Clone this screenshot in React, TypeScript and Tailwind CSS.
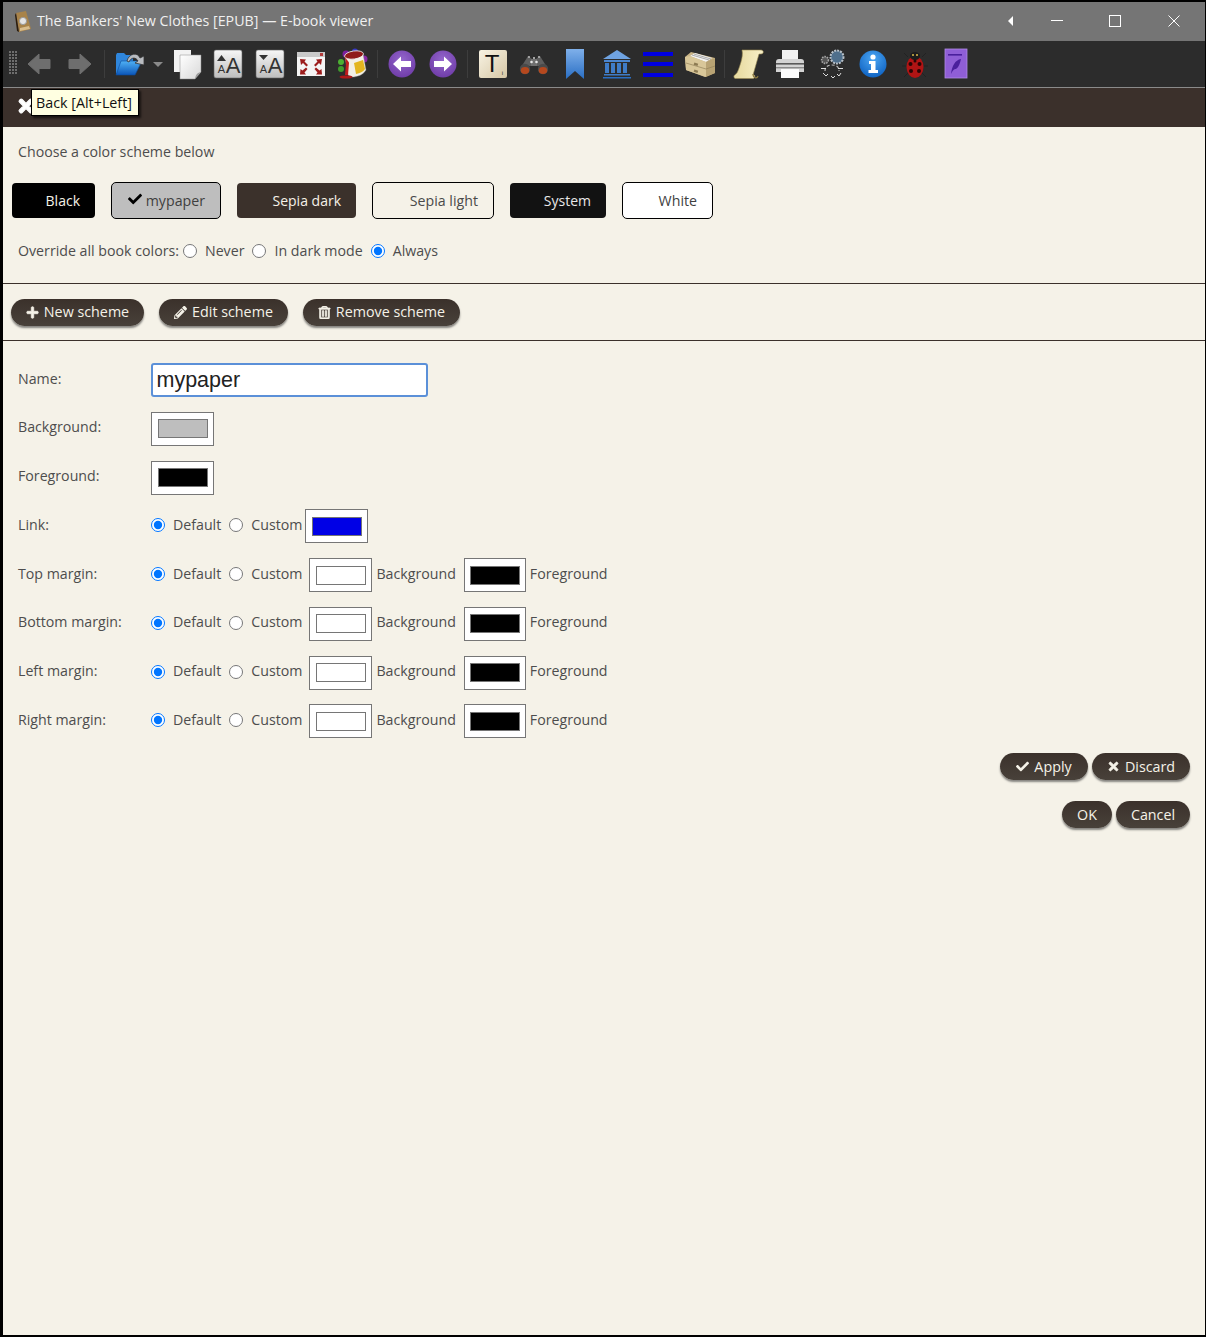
import React from "react";
import { FaCheck, FaPlus, FaPencilAlt, FaRegTrashAlt, FaTimes } from "react-icons/fa";

const font = "font-['Open_Sans','Noto_Sans',sans-serif]";

function Defs() {
  return (
    <svg width="0" height="0" className="absolute">
      <defs>
        <linearGradient id="tile" x1="0" y1="0" x2="0" y2="1"><stop offset="0" stopColor="#f7f7f7" /><stop offset="1" stopColor="#bdbdbd" /></linearGradient>
        <linearGradient id="beige" x1="0" y1="0" x2="1" y2="1"><stop offset="0" stopColor="#f8f3e3" /><stop offset="1" stopColor="#d6c7a6" /></linearGradient>
        <linearGradient id="blueV" x1="0" y1="0" x2="0" y2="1"><stop offset="0" stopColor="#7fb0ea" /><stop offset="1" stopColor="#2a6fc4" /></linearGradient>
        <linearGradient id="folder" x1="0" y1="0" x2="0" y2="1"><stop offset="0" stopColor="#4fb0f5" /><stop offset="1" stopColor="#0b55b8" /></linearGradient>
        <linearGradient id="scroll" x1="0" y1="0" x2="1" y2="0"><stop offset="0" stopColor="#e6d99e" /><stop offset="1" stopColor="#f8f0c8" /></linearGradient>
        <radialGradient id="info" cx="0.5" cy="0.3" r="0.75"><stop offset="0" stopColor="#4ca6f2" /><stop offset="1" stopColor="#0b5fc0" /></radialGradient>
        <radialGradient id="purple" cx="0.5" cy="0.35" r="0.7"><stop offset="0" stopColor="#9466cc" /><stop offset="1" stopColor="#6d3aa6" /></radialGradient>
        <linearGradient id="paper" x1="0" y1="0" x2="1" y2="1"><stop offset="0" stopColor="#ffffff" /><stop offset="1" stopColor="#d8d8d8" /></linearGradient>
      </defs>
    </svg>
  );
}

const Svg = ({ children, w = 32, h = 32 }: { children: React.ReactNode; w?: number; h?: number }) => (
  <svg width={w} height={h} viewBox={`0 0 ${w} ${h}`}>{children}</svg>
);

const GrayArrow = ({ flip }: { flip?: boolean }) => (
  <Svg><g transform={flip ? "translate(32 0) scale(-1 1)" : undefined}><path d="M5 16 L16 6 V11.5 H27 V20.5 H16 V26 Z" fill="#6e6e6e" stroke="#6e6e6e" strokeWidth="1" strokeLinejoin="round" /></g></Svg>
);
const OpenFolder = () => (
  <Svg>
    <path d="M3 7 L4 5 H11 L13 7 H20 V13 H10 L3 27 Z" fill="#2f86dc" />
    <path d="M8 13 H29 L22 27 H3 Z" fill="url(#folder)" stroke="#0a4a9c" strokeWidth="0.6" />
    <path d="M14 13 C16 5 25 4 27 10 L31 8 L31 17 L22 15 L25 13 C23 9 18 9 16 14 Z" fill="#b9bcc0" stroke="#333" strokeWidth="0.8" />
  </Svg>
);
const Pages = () => (
  <Svg>
    <path d="M3 2 H20 V24 H3 Z" fill="#f2f2f2" />
    <path d="M9 7 H30 V24 L24 31 H9 Z" fill="url(#paper)" stroke="#8a8a8a" strokeWidth="0.5" />
    <path d="M30 24 C27 25 25 25 24 31 C26 28 28 26 30 24 Z" fill="#9a9a9a" />
  </Svg>
);
const FontIcon = ({ down }: { down?: boolean }) => (
  <Svg>
    <rect x="2" y="2" width="28" height="28" rx="2" fill="url(#tile)" stroke="#666" strokeWidth="0.6" />
    <path d={down ? "M5 7 H14 L9.5 12 Z" : "M9.5 7 L14 13 H5 Z"} fill="#333" />
    <text x="9.5" y="25" fontSize="11" textAnchor="middle" fill="#333" fontFamily="Liberation Sans">A</text>
    <text x="21" y="25" fontSize="22" textAnchor="middle" fill="#333" fontFamily="Liberation Sans">A</text>
  </Svg>
);
const Fullscreen = () => (
  <Svg>
    <rect x="2" y="4" width="28" height="24" fill="#f4f4f4" />
    <rect x="2" y="4" width="28" height="5" fill="#c9c9c9" />
    <rect x="25" y="5" width="3" height="3" fill="#b23a3a" />
    <g fill="#9c1c1c">
      <path d="M5 11 L11 11.5 L9.5 13.5 L13 17 L11.5 18.5 L8 15 L6 17 Z" />
      <path d="M27 11 L21 11.5 L22.5 13.5 L19 17 L20.5 18.5 L24 15 L26 17 Z" />
      <path d="M5 26.5 L5.5 21 L7.5 22.5 L11 19.5 L12.5 21 L9.5 24.5 L11 26.5 Z" />
      <path d="M27 26.5 L26.5 21 L24.5 22.5 L21 19.5 L19.5 21 L22.5 24.5 L21 26.5 Z" />
    </g>
  </Svg>
);
const Paint = () => (
  <Svg>
    <circle cx="5" cy="14" r="3" fill="#4caf32" /><circle cx="5" cy="21" r="3" fill="#3f9b2c" />
    <circle cx="10" cy="6" r="3.5" fill="#7b1f9c" /><circle cx="19" cy="3.5" r="3" fill="#3a3ac0" />
    <circle cx="28" cy="11" r="3.5" fill="#8a2aa8" />
    <path d="M9 8 L27 6 L30 22 C27 27 21 29 16 29 L12 27 Z" fill="#f2efe6" stroke="#999" strokeWidth="0.4" />
    <ellipse cx="18" cy="7" rx="9.5" ry="4" transform="rotate(-8 18 7)" fill="#8f1a1a" stroke="#eee" strokeWidth="0.8" />
    <path d="M18 15 L27 12 L29 21 C27 24 24 25 20 26 Z" fill="#e3b51f" />
    <path d="M9 8 C10 12 13 13 13 15 L12 27 H9 L10 16 Z" fill="#c11d1d" />
    <ellipse cx="10" cy="29" rx="6.5" ry="1.6" fill="#b01818" />
  </Svg>
);
const PurpleArrow = ({ flip }: { flip?: boolean }) => (
  <Svg>
    <circle cx="16" cy="16" r="13.5" fill="url(#purple)" />
    <g transform={flip ? "translate(32 0) scale(-1 1)" : undefined}>
      <path d="M7 16 L15 8.5 V13 H25 V19 H15 V23.5 Z" fill="#fff" />
    </g>
  </Svg>
);
const TileT = () => (
  <Svg>
    <rect x="2" y="2" width="28" height="28" rx="2" fill="url(#beige)" />
    <text x="15" y="24" fontSize="24" textAnchor="middle" fill="#111" fontFamily="Liberation Sans">T</text>
    <text x="25.5" y="27" fontSize="6" textAnchor="middle" fill="#222" fontFamily="Liberation Sans">i</text>
  </Svg>
);
const Binoculars = () => (
  <Svg>
    <path d="M10 8 L14 11 V18 H7 L2 21 Z" fill="#5e5e5e" />
    <path d="M22 8 L18 11 V18 H25 L30 21 Z" fill="#5e5e5e" />
    <rect x="13" y="11" width="6" height="7" fill="#707070" />
    <circle cx="13.5" cy="14" r="1.3" fill="#e6e6e6" /><circle cx="18.5" cy="14" r="1.3" fill="#e6e6e6" /><circle cx="16" cy="10" r="1" fill="#ccc" />
    <circle cx="7" cy="21" r="5.2" fill="#4a4a4a" /><circle cx="25" cy="21" r="5.2" fill="#4a4a4a" />
    <ellipse cx="7" cy="22.5" rx="4.2" ry="3.4" fill="#b5481e" /><ellipse cx="25" cy="22.5" rx="4.2" ry="3.4" fill="#b5481e" />
    <circle cx="11" cy="9" r="1.1" fill="#b5b5b5" /><circle cx="21" cy="9" r="1.1" fill="#b5b5b5" />
  </Svg>
);
const Bookmark = () => (
  <Svg><path d="M7 1 H25 V31 L16 23 L7 31 Z" fill="url(#blueV)" /></Svg>
);
const Library = () => (
  <Svg>
    <path d="M16 2 L30 11 H2 Z" fill="#6fa3e2" />
    <rect x="3" y="12" width="26" height="2" fill="#4a85d0" />
    <g fill="#3f7cc8"><rect x="4" y="15" width="4" height="10" /><rect x="10" y="15" width="4" height="10" /><rect x="16" y="15" width="4" height="10" /><rect x="22" y="15" width="4" height="10" /></g>
    <rect x="3" y="26" width="26" height="1.5" fill="#3f7cc8" />
    <rect x="2" y="29" width="28" height="1.5" fill="#2a6fc4" />
  </Svg>
);
const Lines = () => (
  <Svg>
    <rect x="1" y="4" width="30" height="4" fill="#0000e0" />
    <rect x="1" y="14" width="30" height="4" fill="#0000e0" />
    <rect x="1" y="25" width="30" height="4" fill="#0000e0" />
  </Svg>
);
const Drawer = () => (
  <Svg>
    <path d="M1 9 L7 4 L31 10 V25 L21 29 L2 22 Z" fill="#c9b486" />
    <path d="M6 8 L11 5 L28 10 L22 14 Z" fill="#f4f4f4" />
    <path d="M8 7 L25 12 M10 6 L27 11" stroke="#8a8a8a" strokeWidth="0.7" />
    <path d="M1 9 L6 8 L22 14 L22 29 L2 22 Z" fill="#d9c799" />
    <path d="M22 14 L31 10 V25 L22 29 Z" fill="#b8a374" />
    <path d="M2 15 L22 21 M22 21 L31 18" stroke="#94825a" strokeWidth="0.7" />
    <rect x="10" y="15" width="4" height="2.5" fill="#8c7a52" transform="rotate(18 12 16)" />
    <rect x="10" y="22" width="4" height="2.5" fill="#8c7a52" transform="rotate(18 12 23)" />
  </Svg>
);
const Scroll = () => (
  <Svg>
    <path d="M9 2 H28 C31 2 31 6 28 6 H26 L20 27 C22 26 23 30 20 30.5 H2 C0 29 1 27 3 26 C5 24 6 20 8 14 C9 10 10 6 9 2 Z" fill="url(#scroll)" stroke="#9b8a52" strokeWidth="0.6" />
    <path d="M20 26 C20 30 24 31 25 28" fill="none" stroke="#8c7a40" strokeWidth="1.2" />
  </Svg>
);
const Printer = () => (
  <Svg>
    <rect x="8" y="2" width="16" height="11" fill="#f2f2f2" />
    <path d="M2 14 Q2 11 5 11 H27 Q30 11 30 14 V24 H2 Z" fill="#d4d4d4" />
    <rect x="2" y="15" width="28" height="1.6" fill="#5a5a5a" />
    <rect x="2" y="19" width="28" height="1.4" fill="#8c8c8c" />
    <rect x="7" y="21" width="18" height="9" fill="#fafafa" />
  </Svg>
);
const Gears = () => (
  <Svg>
    <circle cx="21" cy="9" r="6.5" fill="#4f6f8c" stroke="#b8c0c8" strokeWidth="2" strokeDasharray="2 1" />
    <circle cx="9" cy="12" r="3.4" fill="#555" stroke="#a8a8a8" strokeWidth="1.6" strokeDasharray="1.5 1" />
    <path d="M9 23 C9 18 13 17 16 17 C19 17 23 18 23 23" fill="none" stroke="#bbb" strokeWidth="1.2" strokeDasharray="3 2" />
    <path d="M7 25 L10 28 L12 26 M15 28 L17 30 L19 28 M21 26 L23 28 L25 25" fill="none" stroke="#ddd" strokeWidth="1" />
    <rect x="5" y="20" width="5" height="1" fill="#ddd" /><rect x="22" y="20" width="5" height="1" fill="#ddd" />
  </Svg>
);
const Info = () => (
  <Svg>
    <circle cx="16" cy="16" r="13.5" fill="url(#info)" />
    <circle cx="16" cy="9" r="2.6" fill="#fff" />
    <path d="M12 13 H18.5 V22 H21 V25 H11.5 V22 H14 V16 H12 Z" fill="#fff" />
  </Svg>
);
const Bug = () => (
  <Svg>
    <path d="M9 9 L5 5 M23 9 L27 5 M7 18 L3 18 M25 18 L29 18 M9 25 L5 29 M23 25 L27 29" stroke="#222" strokeWidth="1" />
    <ellipse cx="16" cy="19" rx="8.5" ry="11" fill="#b01414" />
    <ellipse cx="16" cy="8" rx="5" ry="4" fill="#1c1c1c" />
    <circle cx="14" cy="7" r="1" fill="#d8b84a" /><circle cx="18" cy="7" r="1" fill="#d8b84a" />
    <circle cx="11.5" cy="16" r="2" fill="#2a0505" /><circle cx="20.5" cy="16" r="2" fill="#2a0505" />
    <circle cx="12" cy="23" r="2" fill="#2a0505" /><circle cx="20" cy="23" r="2" fill="#2a0505" /><circle cx="16" cy="13" r="1.5" fill="#2a0505" />
  </Svg>
);
const PurpleBook = () => (
  <Svg>
    <rect x="5" y="1" width="22" height="29" fill="#8f5ed6" stroke="#b08ae6" strokeWidth="0.8" />
    <rect x="8" y="6" width="14" height="1.6" fill="#4a1f9c" />
    <path d="M21 11 C15 12 12 18 11 26 C13 22 14 21 16 21 C19 19 20 15 21 11 Z" fill="#4a1f9c" />
  </Svg>
);
const Grip = () => (
  <svg width="9" height="24" viewBox="0 0 9 24">
    <g fill="#6e6e6e">
      {[0, 3, 6, 9, 12, 15, 18, 21].map((y) => [0, 3, 6].map((x) => <rect key={`${x}-${y}`} x={x} y={y} width="2" height="2" />))}
    </g>
  </svg>
);
const BookLogo = () => (
  <svg width="18" height="22" viewBox="0 0 18 22" className="shrink-0">
    <path d="M2 2 L12 0 L17 18 L5 21 Z" fill="#a8834a" />
    <path d="M2 2 L5 21 L3 20 L1 4 Z" fill="#2c1c0c" />
    <circle cx="9" cy="10" r="3.6" fill="#e4e4e4" stroke="#9a9a9a" />
    <path d="M6 17 L15 15 L16 18 L6 20 Z" fill="#d9bd8c" />
  </svg>
);

const Slot = ({ children }: { children: React.ReactNode }) => (
  <div className="w-[41.4px] h-full flex items-center justify-center shrink-0">{children}</div>
);
const Sep = () => (
  <div className="w-2 h-full flex items-center justify-center shrink-0"><div className="w-px h-7 bg-[#3d3d3d]" /></div>
);

function Toolbar() {
  return (
    <div className="h-[46px] bg-[#2c2c2c] flex items-center border-b border-[#8a8a8a] box-content">
      <div className="w-[15px] h-full flex items-center justify-end shrink-0 pb-0.5"><Grip /></div>
      <Slot><GrayArrow /></Slot>
      <Slot><GrayArrow flip /></Slot>
      <Sep />
      <Slot><OpenFolder /></Slot>
      <div className="w-4 h-full flex items-center justify-start shrink-0 pl-[3px]">
        <div className="w-0 h-0 border-x-[5px] border-x-transparent border-t-[5px] border-t-[#8a8a8a]" />
      </div>
      <Slot><Pages /></Slot>
      <Slot><FontIcon /></Slot>
      <Slot><FontIcon down /></Slot>
      <Slot><Fullscreen /></Slot>
      <Slot><Paint /></Slot>
      <Sep />
      <Slot><PurpleArrow /></Slot>
      <Slot><PurpleArrow flip /></Slot>
      <Sep />
      <Slot><TileT /></Slot>
      <Slot><Binoculars /></Slot>
      <Slot><Bookmark /></Slot>
      <Slot><Library /></Slot>
      <Slot><Lines /></Slot>
      <Slot><Drawer /></Slot>
      <Sep />
      <Slot><Scroll /></Slot>
      <Slot><Printer /></Slot>
      <Slot><Gears /></Slot>
      <Slot><Info /></Slot>
      <Slot><Bug /></Slot>
      <Slot><PurpleBook /></Slot>
    </div>
  );
}

function TitleBar() {
  return (
    <div className="h-[39px] bg-[#757575] flex items-center pl-[11px] text-[#f0f0f0]">
      <BookLogo />
      <span className="ml-[5px] text-[14.25px] -mt-0.5">The Bankers' New Clothes [EPUB] — E-book viewer</span>
      <div className="ml-auto flex items-center h-full pb-0.5">
        <div className="w-0 h-0 border-y-[5px] border-y-transparent border-r-[5px] border-r-white mr-[38px]" />
        <div className="w-3 h-px bg-white mr-[46px]" />
        <div className="w-[12px] h-[12px] border border-white mr-[47px]" />
        <svg width="12" height="12" viewBox="0 0 12 12" className="mr-[25px]"><path d="M0.5 0.5 L11.5 11.5 M11.5 0.5 L0.5 11.5" stroke="#fff" strokeWidth="1" /></svg>
      </div>
    </div>
  );
}

const schemes = [
  { n: "Black", w: "w-[85px]", c: "bg-black text-[#f5f2e8]", t: true },
  { n: "mypaper", w: "w-[110px]", c: "bg-[#bebebe] text-[#3f3f3f] border-black", check: true },
  { n: "Sepia dark", w: "w-[121px]", c: "bg-[#3b312b] text-[#f5f2e8]", t: true },
  { n: "Sepia light", w: "w-[122px]", c: "bg-[#f5f2e8] text-[#4a4a4a] border-black" },
  { n: "System", w: "w-[98px]", c: "bg-[#121212] text-[#e8e8e8]", t: true },
  { n: "White", w: "w-[91px]", c: "bg-white text-[#3f3f3f] border-black" },
];

const Radio = ({ name, checked, label }: { name: string; checked?: boolean; label: string }) => (
  <label className="flex items-center">
    <input type="radio" name={name} defaultChecked={checked} className="w-[14px] h-[14px] m-0 accent-[#0075ff]" />
    <span className="ml-2">{label}</span>
  </label>
);

const Swatch = ({ color, className = "", w = "w-[63px]" }: { color: string; className?: string; w?: string }) => (
  <div className={`${w} h-[34px] border border-[#767676] bg-white flex items-center justify-center shrink-0 ${className}`}>
    <div className={`w-[50px] h-[19px] border border-[#767676] ${color}`} />
  </div>
);

const Pill = ({ icon, label, w }: { icon?: React.ReactNode; label: string; w: string }) => (
  <button className={`${w} h-[27px] rounded-full bg-gradient-to-b from-[#3b312b] to-[#48413a] text-[#f5f2e8] text-[14.3px] flex items-center justify-center gap-[5px] shadow-[0_2px_2px_rgba(60,60,60,0.6)] shrink-0`}>
    {icon}
    <span>{label}</span>
  </button>
);

const Row = ({ label, children }: { label: string; children: React.ReactNode }) => (
  <div className="h-[34px] flex items-center">
    <div className="w-[133px] shrink-0 -mt-[3.6px]">{label}</div>
    {children}
  </div>
);

const Choice = ({ id }: { id: string }) => (
  <div className="flex items-center gap-[8px] -mt-[3.6px] [&_input]:mt-[2px]">
    <Radio name={id} checked label="Default" />
    <Radio name={id} label="Custom" />
  </div>
);

const MarginRow = ({ label, id }: { label: string; id: string }) => (
  <Row label={label}>
    <Choice id={id} />
    <Swatch color="bg-white" className="ml-[7px]" />
    <span className="ml-1 -mt-[3.6px]">Background</span>
    <Swatch color="bg-black" w="w-[62px]" className="ml-[8px]" />
    <span className="ml-1 -mt-[3.6px]">Foreground</span>
  </Row>
);

const iconBold = "text-[13px] [stroke-width:30]";

export default function App() {
  return (
    <div className={`relative w-[1206px] h-[1337px] bg-[#f5f2e8] border-l-[3px] border-r border-t-2 border-b-2 border-black text-[14.2px] text-[#4d4d4d] ${font} overflow-hidden`}>
      <Defs />
      <TitleBar />
      <Toolbar />
      <div className="h-[39px] bg-[#3b302b] flex items-center pl-[13px]">
        <FaTimes className="text-white text-[20px] -mt-1 [stroke-width:30]" />
      </div>
      <div className="absolute left-[28px] top-[87px] h-[27px] w-[108px] bg-[#ffffe1] border border-black text-[#111] text-[14.3px] flex items-center justify-center pr-[2px] shadow-[2px_2px_2px_rgba(0,0,0,0.6)]">Back [Alt+Left]</div>

      <div className="px-[15px] h-[156px] flex flex-col">
        <div className="pt-[14px] h-[55px]">Choose a color scheme below</div>
        <div className="flex gap-[15px] -ml-[7px]">
          {schemes.map((s) => (
            <div
              key={s.n}
              className={`${s.w} h-[37px] rounded-[5px] border ${s.t ? "border-transparent bg-clip-padding" : ""} ${s.c} flex items-center justify-end pr-[15px] gap-[4px]`}
            >
              {s.check && <FaCheck className="text-black text-[14px] -mt-1" />}
              <span className={s.t ? "font-medium text-[14px]" : ""}>{s.n}</span>
            </div>
          ))}
        </div>
        <div className="mt-[21px] flex items-center">
          <span className="mr-1">Override all book colors:</span>
          <div className="flex items-center gap-[8px]">
            <Radio name="override" label="Never" />
            <Radio name="override" label="In dark mode" />
            <Radio name="override" checked label="Always" />
          </div>
        </div>
      </div>

      <div className="h-[58px] border-y border-[#3b302b] flex items-start gap-[15px] pl-2 pt-[14.5px]">
        <Pill w="w-[133px]" icon={<FaPlus className={iconBold} />} label="New scheme" />
        <Pill w="w-[129px]" icon={<FaPencilAlt className="text-[13px]" />} label="Edit scheme" />
        <Pill w="w-[157px]" icon={<FaRegTrashAlt className={iconBold} />} label="Remove scheme" />
      </div>

      <div className="px-[15px] pt-[22px] flex flex-col gap-[14.75px]">
        <Row label="Name:">
          <input
            defaultValue="mypaper"
            className="w-[277px] h-[34px] bg-white border-2 border-[#5b90d8] rounded-[3px] px-[3.5px] text-[21.5px] text-[#222] font-['Liberation_Sans',sans-serif] outline-none"
          />
        </Row>
        <Row label="Background:"><Swatch color="bg-[#bebebe]" /></Row>
        <Row label="Foreground:"><Swatch color="bg-black" /></Row>
        <Row label="Link:">
          <Choice id="link" />
          <Swatch color="bg-[#0000e6]" className="ml-[3px]" />
        </Row>
        <MarginRow label="Top margin:" id="top" />
        <MarginRow label="Bottom margin:" id="bottom" />
        <MarginRow label="Left margin:" id="left" />
        <MarginRow label="Right margin:" id="right" />
      </div>

      <div className="flex justify-end gap-1 pr-[15px] mt-[15px]">
        <Pill w="w-[88px]" icon={<FaCheck className="text-[13px]" />} label="Apply" />
        <Pill w="w-[98px]" icon={<FaTimes className={iconBold} />} label="Discard" />
      </div>
      <div className="flex justify-end gap-1 pr-[15px] mt-[21px]">
        <Pill w="w-[50px]" label="OK" />
        <Pill w="w-[74px]" label="Cancel" />
      </div>
    </div>
  );
}
